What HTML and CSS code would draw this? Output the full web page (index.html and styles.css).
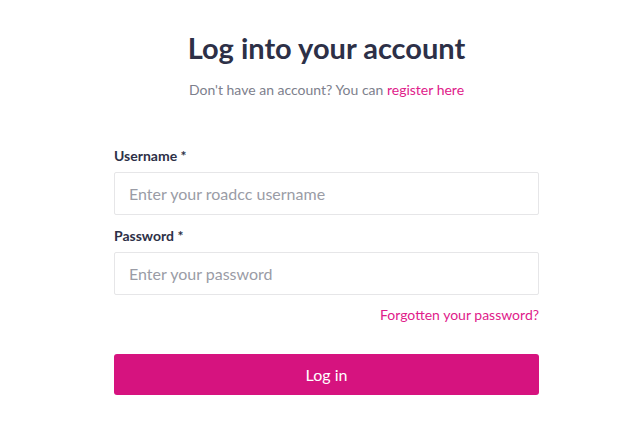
FILE: index.html
```html
<!DOCTYPE html>
<html lang="en">
<head>
<meta charset="utf-8">
<title>Log into your account</title>
<link rel="stylesheet" href="styles.css">
</head>
<body>
<main class="login">
  <h1 class="login__title">Log into your account</h1>
  <p class="login__sub">Don't have an account? You can <a href="#" class="link">register here</a></p>
  <form class="form">
    <label class="form__label" for="u">Username *</label>
    <input class="form__input" id="u" type="text" placeholder="Enter your roadcc username">
    <label class="form__label" for="p">Password *</label>
    <input class="form__input" id="p" type="password" placeholder="Enter your password">
    <div class="form__forgot"><a href="#" class="link">Forgotten your password?</a></div>
    <button class="form__btn" type="button">Log in</button>
  </form>
</main>
</body>
</html>
```
FILE: styles.css
```css
html, body {
  margin: 0;
  padding: 0;
  background: #ffffff;
}
body {
  font-family: Lato, "Source Sans Pro", "Noto Sans", sans-serif;
  color: #2d3047;
}
.login {
  width: 425px;
  margin-left: 114px;
  padding-top: 29px;
  display: flex;
  flex-direction: column;
}
.login__title {
  margin: 0;
  text-align: center;
  font-size: 29px;
  line-height: 38px;
  font-weight: 700;
  color: #2d3047;
}
.login__sub {
  margin: 13px 0 0;
  text-align: center;
  font-size: 14px;
  line-height: 20px;
  color: #7d808c;
}
.link {
  color: #e0208a;
  text-decoration: none;
}
.form {
  margin-top: 46px;
  display: flex;
  flex-direction: column;
}
.form__label {
  font-size: 14px;
  line-height: 20px;
  font-weight: 700;
  color: #2d3047;
}
.form__input {
  margin-top: 6px;
  margin-bottom: 11px;
  height: 43px;
  box-sizing: border-box;
  border: 1px solid #e6e6e8;
  border-radius: 2px;
  padding: 0 14px;
  font-family: inherit;
  font-size: 16px;
  color: #2d3047;
  outline: none;
}
.form__input::placeholder {
  color: #9a9ca6;
}
.form__forgot {
  margin-top: -1px;
  text-align: right;
  font-size: 14px;
  line-height: 20px;
}
.form__btn {
  margin-top: 29px;
  height: 41px;
  border: none;
  border-radius: 3px;
  background: #d6137f;
  color: #ffffff;
  font-family: inherit;
  font-size: 16px;
  cursor: pointer;
}
```
